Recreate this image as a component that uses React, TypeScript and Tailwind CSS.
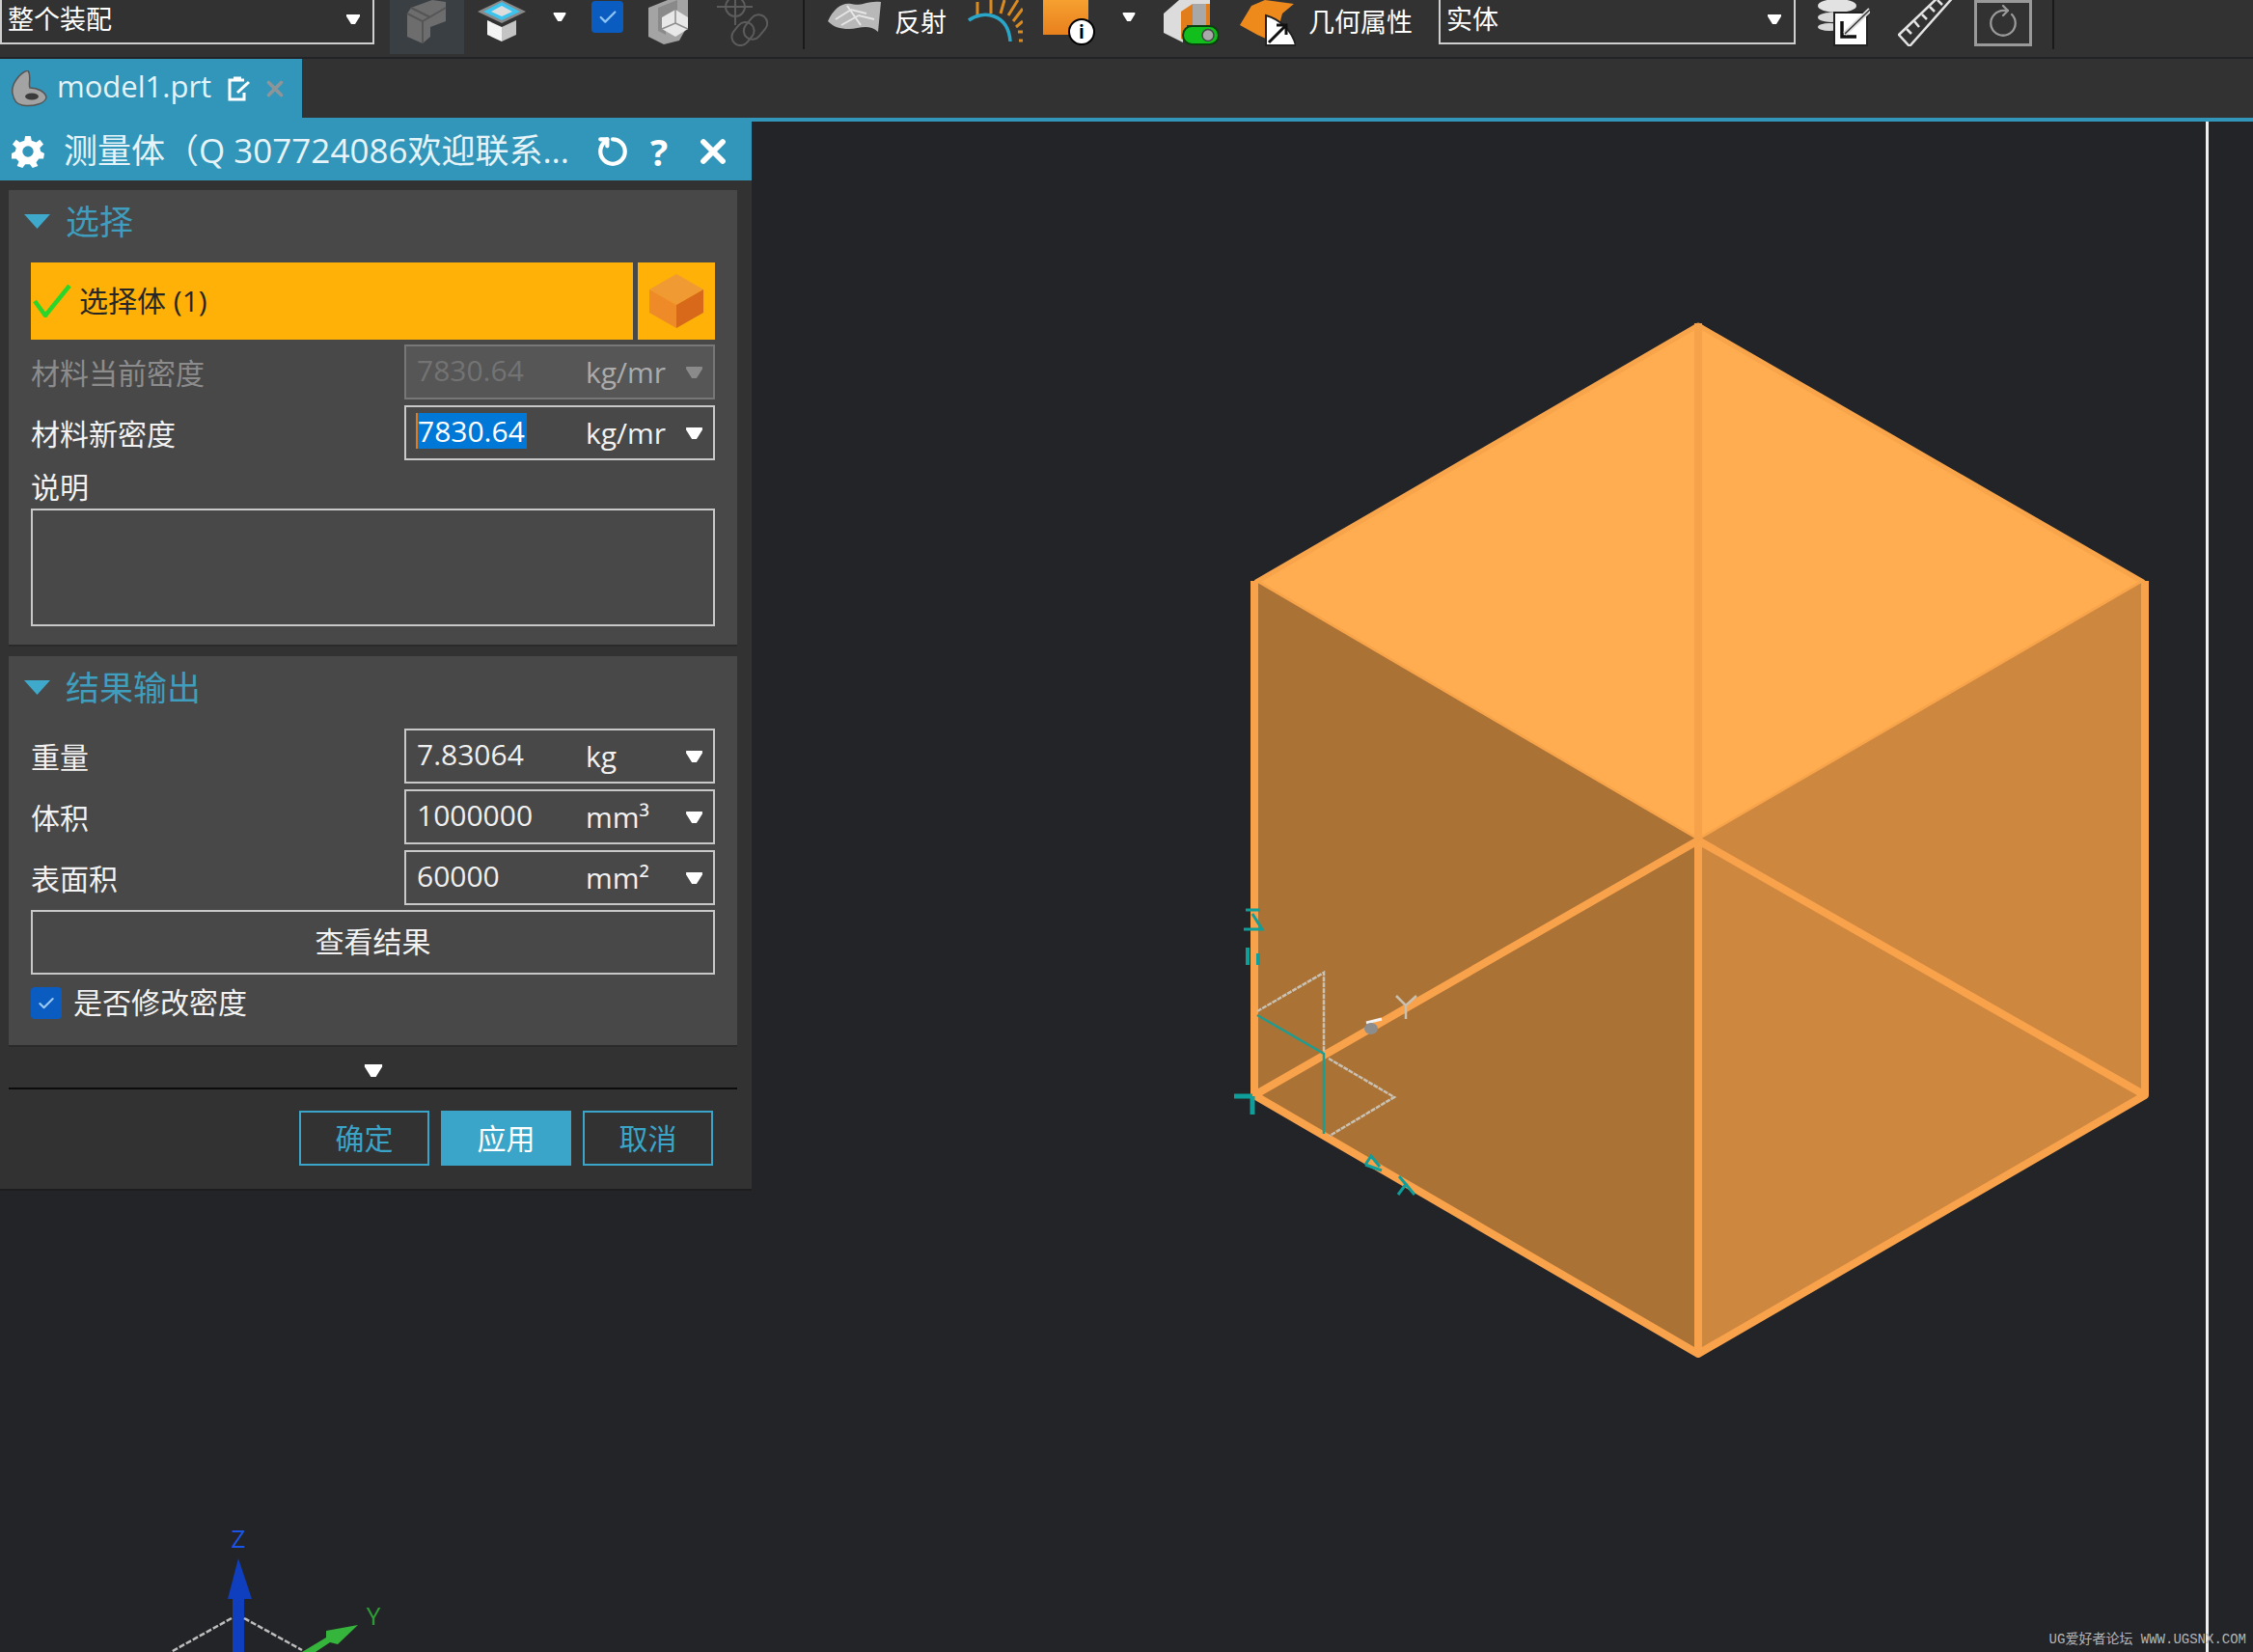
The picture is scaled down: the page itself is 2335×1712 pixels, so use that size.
import React from 'react';
import { Check, RotateCw, X } from 'lucide-react';

const FONT = "font-['Open_Sans','Noto_Sans_CJK_SC',sans-serif]";

function Caret({ className = 'w-[14px] h-[10px]', color = '#ffffff' }: { className?: string; color?: string }) {
  return (
    <svg viewBox="0 0 14 10" className={className}>
      <path d="M0 0H14V2L9 10H5L0 2Z" fill={color} />
    </svg>
  );
}

function SectionTitle({ title }: { title: string }) {
  return (
    <div className="h-[75px] flex items-center ml-[-7px] pb-[10px]">
      <svg viewBox="0 0 27 15" className="w-[27px] h-[15px]">
        <path d="M0 0H27L13.5 15Z" fill="#3FA9CC" />
      </svg>
      <span className="ml-[16px] text-[35px] leading-none text-[#3F9DBD]">{title}</span>
    </div>
  );
}

interface FieldProps {
  label: string;
  value: string;
  unit: string;
  disabled?: boolean;
  selected?: boolean;
}

function Field({ label, value, unit, disabled = false, selected = false }: FieldProps) {
  return (
    <div className="flex items-center h-[57px]">
      <div className={`w-[387px] pt-[2px] text-[30px] leading-none ${disabled ? 'text-[#8c8c8c]' : 'text-[#f2f2f2]'}`}>{label}</div>
      <div className={`w-[322px] h-full flex items-center border-2 pl-[11px] ${disabled ? 'border-[#777777] bg-[#565656]' : 'border-[#c8c8c8]'}`}>
        <div className="w-[175px] flex pb-[4px]">
          {selected ? (
            <span className="h-[37px] flex items-center text-[30px] leading-none text-white bg-[#0078D7] border-l-2 border-[#E07B20] pr-[2px] ml-[-1px]">{value}</span>
          ) : (
            <span className={`h-[37px] flex items-center text-[30px] leading-none ${disabled ? 'text-[#737373]' : 'text-[#f0f0f0]'}`}>{value}</span>
          )}
        </div>
        <div className={`w-[104px] text-[30px] leading-none ${disabled ? 'text-[#ababab]' : 'text-[#f2f2f2]'}`}>{unit}</div>
        <Caret className="w-[17px] h-[12px]" color={disabled ? '#8a8a8a' : '#ffffff'} />
      </div>
    </div>
  );
}

function OutlineButton({ label, primary = false }: { label: string; primary?: boolean }) {
  return (
    <div className={`w-[135px] h-[57px] flex items-center justify-center border-2 border-[#3AA5C8] text-[30px] leading-none ${primary ? 'bg-[#3AA5C8] text-white' : 'text-[#3AA5C8]'}`}>
      {label}
    </div>
  );
}

function Toolbar() {
  return (
    <div className="h-[61px] bg-[#323232] border-b-2 border-[#222326] flex items-start overflow-hidden text-white">
      <div className="w-[388px] h-[46px] border-x-2 border-b-2 border-[#cfcfcf] flex items-center pl-[6px] pr-[13px] pb-[5px] justify-between">
        <span className="text-[27px] leading-none">整个装配</span>
        <Caret />
      </div>

      <div className="ml-[16px] w-[77px] h-[56px] bg-[#3A3F44] flex justify-center">
        <svg viewBox="0 0 50 46" className="w-[50px] h-[46px]">
          <path d="M8 8L30 0L44 2V22L28 28V38L20 45L4 38V14Z" fill="#6d6d6d" />
          <path d="M4 14L20 22V45M20 22L44 8M8 8L28 18" stroke="#555" strokeWidth="2" fill="none" />
        </svg>
      </div>

      <svg viewBox="0 0 50 44" className="ml-[14px] w-[50px] h-[44px]">
        <path d="M25 0L50 12L25 24L0 12Z" fill="#8a8a8a" />
        <path d="M25 2L44 12L25 21L6 12Z" fill="#3CC3EE" />
        <path d="M25 6L36 12L25 17L14 12Z" fill="#dcdcdc" />
        <path d="M10 21L25 28V43L10 36Z" fill="#f4f4f4" />
        <path d="M40 21L25 28V43L40 36Z" fill="#c4c4c4" />
      </svg>

      <Caret className="ml-[28px] mt-[13px] w-[14px] h-[9px]" />

      <div className="ml-[26px] mt-px w-[33px] h-[33px] rounded-[4px] bg-[#0A5CC0] flex items-center justify-center">
        <Check className="w-[22px] h-[22px] text-[#8CC4F5]" strokeWidth={2.5} />
      </div>

      <svg viewBox="0 0 41 46" className="ml-[26px] w-[41px] h-[46px]">
        <path d="M0 8L20 0H41V26L32 42L16 46L0 38Z" fill="#a4a4a4" />
        <path d="M10 8L30 0V10L18 16V36L10 32Z" fill="#8a8a8a" />
        <path d="M14 18L28 10L41 18V30L28 38L14 30Z" fill="#e8e8e8" />
        <path d="M28 10V24L14 30M28 24L41 30" stroke="#8d8d8d" strokeWidth="1.5" fill="none" />
      </svg>

      <svg viewBox="0 0 60 48" className="ml-[30px] w-[60px] h-[48px]" fill="none" stroke="#5c5c5c" strokeWidth="2">
        <circle cx="19" cy="7" r="10" />
        <path d="M0 7H37M19 -6V26" />
        <rect x="31" y="14" width="18" height="28" rx="9" transform="rotate(40 40 28)" />
        <rect x="18" y="22" width="18" height="26" rx="9" transform="rotate(40 27 35)" />
      </svg>

      <div className="ml-[29px] w-[2px] h-[51px] bg-[#1a1a1a]" />

      <svg viewBox="0 0 55 35" className="ml-[24px] w-[55px] h-[35px]">
        <path d="M0 22C6 8 16 2 24 4C34 7 42 0 55 2L52 33C42 24 32 30 22 30C12 30 6 28 0 22Z" fill="#b8b8b8" />
        <path d="M8 20L24 10L40 14M14 26L32 16L48 20M20 6L34 26" stroke="#e6e6e6" strokeWidth="2" fill="none" />
      </svg>

      <span className="ml-[14px] mt-[9px] text-[27px] leading-none">反射</span>

      <svg viewBox="0 0 57 44" className="ml-[22px] w-[57px] h-[44px]" fill="none">
        <g stroke="#D98A20" strokeWidth="3">
          <path d="M10 16V2M24 14V0M34 14L38 0M42 16L52 0M47 22L57 9M50 28L57 22M52 33H57M53 42H57" />
        </g>
        <path d="M1 21C16 10 42 14 44 43" stroke="#2AA6C8" strokeWidth="3.5" />
      </svg>

      <div className="ml-[21px] relative w-[54px] h-[47px]">
        <div className="w-[47px] h-[36px] bg-gradient-to-b from-[#F6A030] to-[#E8801C]" />
        <div className="absolute right-0 bottom-0 w-[28px] h-[28px] rounded-full bg-white border-2 border-black flex items-center justify-center text-[19px] leading-none font-bold text-black">i</div>
      </div>

      <Caret className="ml-[28px] mt-[13px] w-[14px] h-[9px]" />

      <svg viewBox="0 0 57 47" className="ml-[29px] w-[57px] h-[47px]">
        <path d="M0 14L16 0H48V26H20V44L0 34Z" fill="#dcdcdc" />
        <path d="M18 12L30 4H48V26H24V44L18 40Z" fill="#E27D1C" />
        <path d="M30 4H44V26H30Z" fill="#a8a8a8" />
        <rect x="20" y="27" width="37" height="19" rx="9.5" fill="#12BE1C" stroke="#0b3d0e" strokeWidth="2" />
        <circle cx="46" cy="36.5" r="6" fill="#a9a9a9" stroke="#444" strokeWidth="1.5" />
      </svg>

      <svg viewBox="0 0 58 48" className="ml-[22px] w-[58px] h-[48px]">
        <path d="M12 6L26 0L56 4L44 14L36 44L18 36L0 26Z" fill="#EE8A1C" />
        <path d="M27 16C42 20 54 32 58 47H27Z" fill="#ffffff" stroke="#222" strokeWidth="2" />
        <path d="M30 44L48 26M38 26H48V36" stroke="#111" strokeWidth="3" fill="none" />
      </svg>

      <span className="ml-[13px] mt-[9px] text-[27px] leading-none">几何属性</span>

      <div className="ml-[27px] w-[370px] h-[46px] border-x-2 border-b-2 border-[#cfcfcf] flex items-center pl-[6px] pr-[13px] pb-[5px] justify-between">
        <span className="text-[27px] leading-none">实体</span>
        <Caret />
      </div>

      <svg viewBox="0 0 56 48" className="ml-[21px] w-[56px] h-[48px]">
        <ellipse cx="22" cy="6" rx="20" ry="7" fill="#e2e2e2" />
        <ellipse cx="16" cy="18" rx="14" ry="5" fill="#d8d8d8" />
        <ellipse cx="14" cy="28" rx="12" ry="4" fill="#d8d8d8" />
        <rect x="19" y="13" width="34" height="34" fill="#ffffff" stroke="#222" strokeWidth="2" />
        <path d="M27 22V38H42" stroke="#111" strokeWidth="3.5" fill="none" />
        <path d="M30 35L56 10" stroke="#dddddd" strokeWidth="5" />
        <path d="M30 35L56 10" stroke="#333" strokeWidth="1.5" />
      </svg>

      <svg viewBox="0 0 60 48" className="ml-[29px] w-[60px] h-[48px]" fill="none" stroke="#e4e4e4" strokeWidth="2.5">
        <path d="M1 36L45 -6L60 -6L12 48Z" />
        <path d="M9 30L14 35M17 22L22 28M25 15L30 20M33 7L38 12M41 0L46 5" />
      </svg>

      <div className="ml-[19px] w-[60px] h-[48px] border-[3px] border-[#9a9a9a] flex items-center justify-center">
        <RotateCw className="w-[34px] h-[34px] text-[#9a9a9a] -rotate-45" strokeWidth={1.6} />
      </div>

      <div className="ml-[21px] w-[2px] h-[51px] bg-[#1a1a1a]" />
    </div>
  );
}

function TabStrip() {
  return (
    <div className="h-[61px] bg-[#323232] flex">
      <div className="w-[313px] h-full bg-[#3196BA] flex items-center pl-[9px] text-white">
        <svg viewBox="0 0 40 38" className="w-[40px] h-[38px]">
          <path d="M4 24C2 14 12 2 20 0C24 6 20 14 22 18C30 18 38 22 39 28C38 34 26 38 14 36C8 35 5 30 4 24Z" fill="#a3a3a3" stroke="#555" strokeWidth="1.5" />
          <ellipse cx="24" cy="27" rx="7" ry="3.5" fill="#3b3b3b" />
        </svg>
        <span className="ml-[10px] text-[31px] leading-none text-[#e4f3f8] pb-[4px]">model1.prt</span>
        <svg viewBox="0 0 24 26" className="ml-[17px] w-[24px] h-[26px]" fill="none" stroke="#ffffff" strokeWidth="3">
          <path d="M17 4H2V24H17V17" />
          <path d="M6 2H14M10 17L22 6" />
        </svg>
        <X className="ml-[12px] w-[26px] h-[26px] text-[#8d9599]" strokeWidth={3.5} />
      </div>
    </div>
  );
}

function MeasurePanel() {
  return (
    <div className="relative w-[779px] h-[1108px] bg-[#323232] border-b-2 border-[#1d1d1f] flex flex-col">
      <div className="h-[61px] bg-[#3196BA] flex items-center pl-[12px] text-white">
        <svg viewBox="0 0 36 36" className="w-[34px] h-[34px]">
          <path d="M15 1H21L22 6L27 8L31 5L35 10L31 14L32 18L36 20L35 26L30 26L27 30L29 34L23 36L20 32H15L12 36L6 34L8 29L5 26L0 26L0 20L4 18L5 14L1 10L5 5L9 8L14 6Z" fill="#ffffff" />
          <circle cx="18" cy="18" r="6" fill="#3196BA" />
        </svg>
        <span className="ml-[20px] w-[552px] text-[35px] leading-[48px] text-[#e6f4f9] whitespace-nowrap pb-[2px]">测量体（Q 307724086欢迎联系...</span>
        <RotateCw className="w-[34px] h-[34px] text-white -rotate-90" strokeWidth={3} />
        <span className="ml-[22px] w-[20px] text-[38px] font-bold leading-none">?</span>
        <X className="ml-[25px] w-[40px] h-[40px]" strokeWidth={3.5} />
      </div>

      <div className="pl-[9px] pr-[15px] pt-[10px] flex flex-col flex-1">
        <div className="h-[473px] bg-[#484848] border-b-2 border-[#2a2a2a] px-[23px] flex flex-col">
          <SectionTitle title="选择" />
          <div className="flex h-[80px]">
            <div className="w-[624px] bg-[#FFB108] flex items-center pl-[2px]">
              <svg viewBox="0 0 40 34" className="w-[40px] h-[34px]">
                <path d="M2 17L13 32L38 1" fill="none" stroke="#2BD62B" strokeWidth="4.5" />
              </svg>
              <span className="ml-[8px] text-[30px] leading-none text-[#262626]">选择体 (1)</span>
            </div>
            <div className="ml-[5px] w-[80px] bg-[#FFB108] flex items-center justify-center">
              <svg viewBox="0 0 56 56" className="w-[56px] h-[56px]">
                <path d="M28 0L56 16L28 32L0 16Z" fill="#F09A34" />
                <path d="M0 16L28 32V56L0 40Z" fill="#EE8A28" />
                <path d="M56 16L28 32V56L56 40Z" fill="#D8681A" />
              </svg>
            </div>
          </div>
          <div className="mt-[5px] flex flex-col gap-[6px]">
            <Field label="材料当前密度" value="7830.64" unit="kg/mr" disabled />
            <Field label="材料新密度" value="7830.64" unit="kg/mr" selected />
          </div>
          <div className="h-[50px] flex items-end pb-[7px] text-[30px] leading-none text-[#f2f2f2]">说明</div>
          <div className="h-[122px] border-2 border-[#c8c8c8]" />
        </div>

        <div className="mt-[10px] h-[405px] bg-[#484848] border-b-2 border-[#2a2a2a] px-[23px] flex flex-col">
          <SectionTitle title="结果输出" />
          <div className="flex flex-col gap-[6px]">
            <Field label="重量" value="7.83064" unit="kg" />
            <Field label="体积" value="1000000" unit="mm³" />
            <Field label="表面积" value="60000" unit="mm²" />
          </div>
          <div className="mt-[5px] h-[67px] border-2 border-[#c8c8c8] flex items-center justify-center pb-[2px] text-[30px] leading-none text-[#f2f2f2]">查看结果</div>
          <div className="mt-[13px] flex items-center">
            <div className="w-[32px] h-[33px] rounded-[4px] bg-[#0A5CC0] flex items-center justify-center">
              <Check className="w-[20px] h-[20px] text-[#9CCBF5]" strokeWidth={2.5} />
            </div>
            <span className="ml-[12px] pb-[2px] text-[30px] leading-none text-[#f2f2f2]">是否修改密度</span>
          </div>
        </div>

        <div className="h-[44px] pt-[6px] border-b-2 border-[#0c0c0c] flex items-center justify-center">
          <Caret className="w-[22px] h-[13px]" />
        </div>

        <div className="mt-[22px] flex justify-end gap-[12px] pr-[25px]">
          <OutlineButton label="确定" />
          <OutlineButton label="应用" primary />
          <OutlineButton label="取消" />
        </div>
      </div>
    </div>
  );
}

// model, WCS and view triad; coordinates are page pixels (viewBox starts under the tab strip)
function ModelView() {
  return (
    <svg viewBox="0 126 2335 1586" className="absolute inset-0 w-full h-full">
      <polygon points="1760,337 2221,603 1760,871 1302,603" fill="#FFAD50" stroke="#F7A44B" strokeWidth="5" strokeLinejoin="round" />
      <polygon points="1300,602 1760,871 1760,1403 1300,1135" fill="#AB7235" />
      <polygon points="2223,602 1760,871 1760,1403 2223,1135" fill="#CE873F" />

      <g stroke="#F9A24C" strokeWidth="8" fill="none" strokeLinejoin="round">
        <path d="M1300 602V1135L1760 1403L2223 1135V602" />
        <path d="M1300 1135L1760 871L2223 1135" />
        <path d="M1760 871V1403" />
      </g>
      <path d="M1760 335V871" stroke="#F5A24B" strokeWidth="8" />

      <g fill="none" strokeWidth="2.5">
        <path d="M1303 1048L1372 1008V1092M1377 1097L1445 1137L1378 1177" stroke="#c9c2b4" strokeDasharray="5 1" />
        <path d="M1303 1052L1372 1092V1097V1175" stroke="#1F9C90" />
        <path d="M1447 1032L1457 1042L1468 1032M1457 1042V1056" stroke="#c8c0b0" />
        <path d="M1416 1060L1432 1056" stroke="#f2f2f2" strokeWidth="3" />
      </g>
      <ellipse cx="1421" cy="1066" rx="7" ry="6" fill="#8d8d8d" />

      <g stroke="#0F9E9A" fill="none" strokeWidth="3">
        <path d="M1291 943H1306M1289 963H1308L1298 947" />
        <path d="M1293 982V1000M1304 988V1000" strokeWidth="4" />
        <path d="M1279 1136H1298M1298 1136V1155" strokeWidth="5" />
        <path d="M1415 1207L1421 1198L1430 1209M1415 1207L1432 1213" />
        <path d="M1450 1219L1466 1238M1449 1238L1458 1226" />
      </g>

      <path d="M241 1712V1657H236L247 1615L261 1657H253V1712Z" fill="#0F3FBE" />
      <text x="247" y="1604" textAnchor="middle" fontSize="26" fill="#1A55E8" fontFamily="Open Sans">Z</text>
      <path d="M240 1677L177 1712M253 1677L313 1710" stroke="#bdbdbd" strokeWidth="2.5" strokeDasharray="6 2" fill="none" />
      <path d="M313 1712L338 1697V1690L371 1684L350 1704L342 1702L327 1712Z" fill="#35B53B" />
      <text x="387" y="1684" textAnchor="middle" fontSize="26" fill="#2E9E36" fontFamily="Open Sans">Y</text>
    </svg>
  );
}

export default function App() {
  return (
    <div className={`w-[2335px] h-[1712px] overflow-hidden bg-[#232428] flex flex-col ${FONT}`}>
      <Toolbar />
      <TabStrip />
      <div className="h-[4px] bg-[#3196BA]" />
      <div className="relative flex-1 flex items-start overflow-hidden">
        <ModelView />
        <MeasurePanel />
        <div className="absolute top-0 bottom-0 left-[2286px] w-[3px] bg-[#eeeeee]" />
        <div className="absolute right-[7px] bottom-[6px] whitespace-nowrap font-['Liberation_Mono','Noto_Sans_CJK_SC',monospace] text-[14px] leading-none text-[#b5b5b5]">UG爱好者论坛 WWW.UGSNX.COM</div>
      </div>
    </div>
  );
}
